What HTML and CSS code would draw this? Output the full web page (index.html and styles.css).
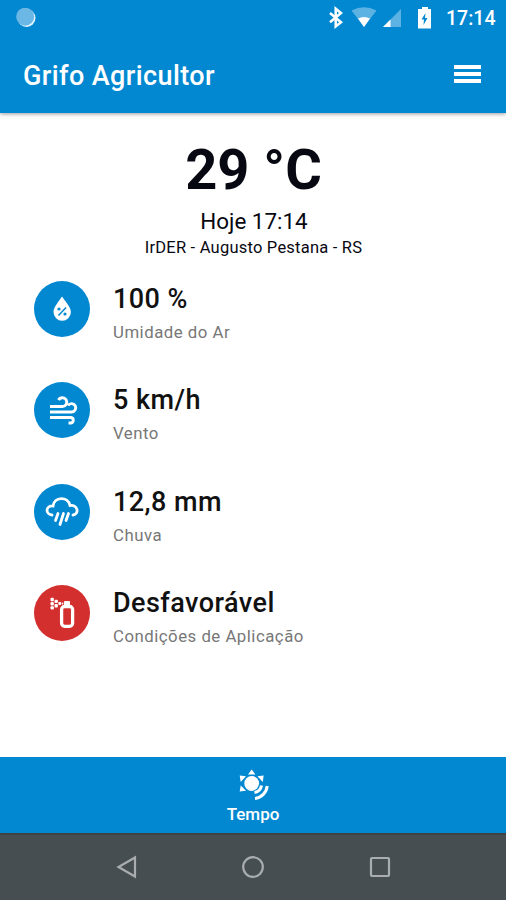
FILE: index.html
```html
<!DOCTYPE html>
<html lang="pt-BR">
<head>
    <meta charset="UTF-8">
    <meta name="viewport" content="width=device-width, initial-scale=1.0">
    <title>Grifo Agricultor</title>
    <link rel="stylesheet" href="styles.css">
</head>
<body>
    <div class="app">
        <!-- Header -->
        <header class="header">
            <div class="status-bar">
                <svg class="sync" width="20" height="20" viewBox="0 0 20 20">
                    <circle cx="10.5" cy="10" r="9" fill="#e6f5ff"/>
                    <circle cx="9.2" cy="8.700" r="9" fill="#6bb8e6"/>
                </svg>
                <svg class="status-icons" width="108" height="24" viewBox="328 6 108 24">
                    <path d="M330 13L341 22.300L335.700 26.500V8.700L341 13L330 22.300" fill="none" stroke="#fff" stroke-width="2.500"/>
                    <path d="M351.500 10.500Q364 4 376.500 10.500L364 27Z" fill="#5cb2e2"/>
                    <path d="M358 18.500Q364 15.500 370 18.500L364 27Z" fill="#fff"/>
                    <path d="M401 9V27H383Z" fill="#5cb2e2"/>
                    <path d="M390.500 19.500V27H383Z" fill="#fff"/>
                    <path d="M422 7H428V9H431V28.500H418V9H422Z" fill="#fff"/>
                    <path d="M425.500 13L421.500 19.500H424L423.500 25L427.500 18H425Z" fill="#0288d1"/>
                </svg>
                <span class="clock">17:14</span>
            </div>
            <div class="toolbar">
                <h1>Grifo Agricultor</h1>
                <div class="menu"><span></span><span></span><span></span></div>
            </div>
        </header>

        <!-- Weather -->
        <main class="content">
            <div class="current">
                <p class="temperature">29 °C</p>
                <p class="time">Hoje 17:14</p>
                <p class="station">IrDER - Augusto Pestana - RS</p>
            </div>

            <ul class="readings">
                <li class="reading">
                    <svg class="reading-icon" viewBox="0 0 56 56">
                        <path d="M28 15.500C25.500 19.500 19.500 26 19.500 31A8.700 8.700 0 0 0 36.900 31C36.900 26 30.500 19.500 28 15.500Z" fill="#fff"/>
                        <path d="M24.500 34.500L32 26.500" stroke="#0288d1" stroke-width="1.600"/>
                        <circle cx="25" cy="28" r="1.600" fill="#0288d1"/>
                        <circle cx="31" cy="33" r="1.600" fill="#0288d1"/>
                    </svg>
                    <div>
                        <h2>100 %</h2>
                        <p>Umidade do Ar</p>
                    </div>
                </li>
                <li class="reading">
                    <svg class="reading-icon" viewBox="0 0 56 56">
                        <path d="M16 24.500H28.500A4.400 4.400 0 1 0 24.500 18M16 30H37.500A4.200 4.200 0 1 0 34 23.500M16 35.500H37A2.800 2.800 0 0 1 37 41H34.500" fill="none" stroke="#fff" stroke-width="2.900"/>
                    </svg>
                    <div>
                        <h2>5 km/h</h2>
                        <p>Vento</p>
                    </div>
                </li>
                <li class="reading">
                    <svg class="reading-icon" viewBox="0 0 56 56">
                        <path d="M18 31C11 30 11.500 21.500 19 22C20 12.500 34 12 36 21.500C44 20.500 45.500 30 39 31" fill="none" stroke="#fff" stroke-width="2.800" stroke-linecap="round"/>
                        <path d="M24 29.500L21.500 36.500M29.500 29.500L26 40.500M34.500 29.500L32 36.500" stroke="#fff" stroke-width="2.800" stroke-linecap="round"/>
                    </svg>
                    <div>
                        <h2>12,8 mm</h2>
                        <p>Chuva</p>
                    </div>
                </li>
                <li class="reading">
                    <svg class="reading-icon alert" viewBox="0 0 56 56">
                        <path d="M30 17Q30 16 31 16H35Q36 16 36 17V21H30Z" fill="#fff"/>
                        <rect x="27.600" y="21.500" width="11" height="19.800" rx="3" fill="none" stroke="#fff" stroke-width="3.300"/>
                        <g fill="#fff">
                            <rect x="16.500" y="12.800" width="3.400" height="3.400" rx="1"/>
                            <rect x="16.500" y="17" width="3.400" height="3.400" rx="1"/>
                            <rect x="16.500" y="21.200" width="3.400" height="3.400" rx="1"/>
                            <rect x="20.500" y="14.700" width="3.400" height="3.400" rx="1"/>
                            <rect x="20.500" y="19" width="3.400" height="3.400" rx="1"/>
                            <rect x="24.300" y="17" width="2.800" height="3" rx="1"/>
                            <circle cx="28.500" cy="18.500" r="0.900"/>
                        </g>
                    </svg>
                    <div>
                        <h2>Desfavorável</h2>
                        <p>Condições de Aplicação</p>
                    </div>
                </li>
            </ul>
        </main>

        <!-- Bottom tab -->
        <footer class="tab-bar">
            <svg width="32" height="34" viewBox="238 768 32 34">
                <g fill="#fff">
                    <circle cx="251.700" cy="783.500" r="7.400"/>
                    <path d="M248 774.500L251.700 769.500L255.400 774.500ZM239.700 775.500L246 776.300L240.700 782ZM263.700 775.500L257.500 776.300L262.700 782ZM239.700 791.500L240.700 785.500L246 790.800Z"/>
                </g>
                <path d="M261.500 785.500A9 9 0 0 1 254.500 793M267.500 786A15 15 0 0 1 255 799" fill="none" stroke="#0288d1" stroke-width="5.500"/>
                <path d="M261.500 785.500A8.500 8.500 0 0 1 254.500 792.500M267.200 786A14 14 0 0 1 255 798.500" fill="none" stroke="#fff" stroke-width="3"/>
            </svg>
            <span>Tempo</span>
        </footer>

        <!-- System navigation -->
        <nav class="system-nav">
            <svg width="22" height="24" viewBox="0 0 22 24"><path d="M19 2.500V21.500L2.500 12Z"/></svg>
            <svg width="24" height="24" viewBox="0 0 24 24"><circle cx="12" cy="12" r="9.800"/></svg>
            <svg width="24" height="24" viewBox="0 0 24 24"><rect x="3" y="3" width="18" height="18" rx="1"/></svg>
        </nav>
    </div>
</body>
</html>
```
FILE: styles.css
```css
* {
    margin: 0;
    padding: 0;
    box-sizing: border-box;
}

body {
    font-family: Roboto, "Liberation Sans", sans-serif;
    background-color: #fff;
    color: #111;
}

.app {
    display: flex;
    flex-direction: column;
    height: 900px;
}

.header {
    height: 113px;
    background-color: #0288d1;
    color: #fff;
    box-shadow: 0 1px 4px rgba(0, 0, 0, 0.4);
}

.status-bar {
    display: flex;
    align-items: center;
    height: 36px;
    padding: 0 11px 0 16px;
}

.status-icons {
    margin-left: auto;
    margin-right: 10px;
}

.clock {
    width: 49px;
    font-size: 19.5px;
    font-weight: 500;
    white-space: nowrap;
}

.toolbar {
    display: flex;
    justify-content: space-between;
    align-items: center;
    height: 77px;
    padding: 0 25px 0 23px;
}

.toolbar h1 {
    margin-top: 2px;
    font-size: 27px;
    font-weight: 500;
    letter-spacing: 0.4px;
}

.menu {
    display: flex;
    flex-direction: column;
    gap: 3px;
    width: 27px;
    margin-top: -2px;
}

.menu span {
    height: 4px;
    background-color: #fff;
}

.content {
    flex: 1;
    padding: 24px 34px 0;
}

.current {
    text-align: center;
    color: #080812;
}

.temperature {
    padding-left: 1px;
    font-size: 56px;
    font-weight: 700;
    line-height: 66px;
}

.time {
    margin-top: 4px;
    font-size: 22.4px;
    line-height: 28px;
    padding-left: 2px;
}

.station {
    margin-top: 1px;
    font-size: 16.5px;
    line-height: 24px;
    letter-spacing: 0.22px;
    padding-left: 1px;
}

.readings {
    margin-top: 21px;
    list-style: none;
}

.reading {
    display: flex;
    gap: 23px;
    height: 101.3px;
}

.reading-icon {
    width: 56px;
    height: 56px;
    border-radius: 50%;
    background-color: #0288d1;
}

.alert {
    background-color: #d32f2f;
}

.reading h2 {
    padding-top: 1px;
    font-size: 27px;
    font-weight: 500;
    line-height: 34px;
    letter-spacing: 0.45px;
}

.reading p {
    margin-top: 5px;
    font-size: 16.8px;
    line-height: 22px;
    letter-spacing: 0.5px;
    color: #777;
}

.tab-bar {
    display: flex;
    flex-direction: column;
    align-items: center;
    height: 76px;
    padding-top: 11px;
    background-color: #0288d1;
    color: #fff;
}

.tab-bar svg {
    margin-left: 2px;
}

.tab-bar span {
    font-size: 17px;
    font-weight: 500;
    line-height: 24px;
}

.system-nav {
    display: flex;
    justify-content: space-between;
    align-items: center;
    height: 67px;
    padding: 0 114px 2px 116px;
    border-top: 2px solid #434341;
    background-color: #464e52;
}

.system-nav svg {
    fill: none;
    stroke: #a9adaf;
    stroke-width: 2.2;
}
```
